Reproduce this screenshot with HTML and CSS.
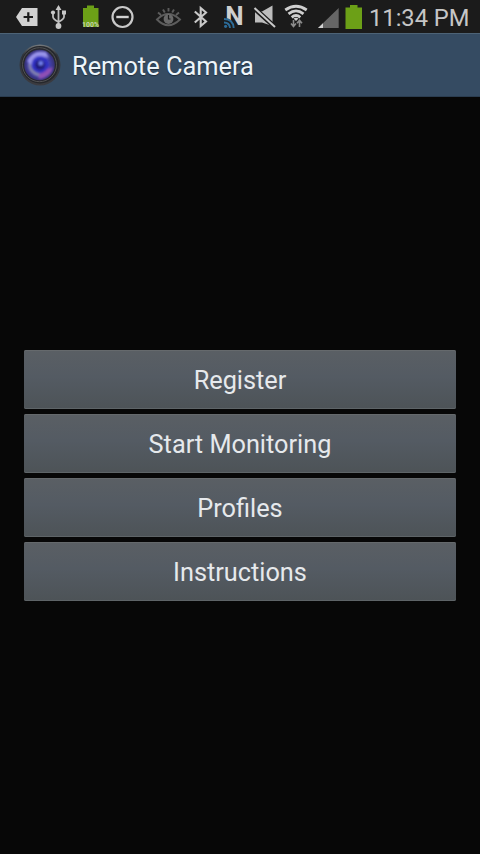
FILE: index.html
```html
<!DOCTYPE html>
<html lang="en">
<head>
<meta charset="utf-8">
<title>Remote Camera</title>
<link rel="stylesheet" href="styles.css">
</head>
<body>
<div class="status">
  <div class="icons notes">
    <svg class="icon" viewBox="10 0 32 33"><path fill="#d2d2d2" d="M16 17 22 8H37.5V26H22Z"/><path stroke="#1b1b1b" stroke-width="2.2" d="M28.3 12.3V21.7M23.6 17H33"/></svg>
    <svg class="icon" viewBox="42 0 32 33"><g fill="none" stroke="#bdbdbd" stroke-width="1.8"><path d="M58.5 8V27M53 12V17Q53 19 58.5 22M64 12V17Q64 19 58.5 22"/></g><path fill="#c8c8c8" d="M58.5 5 61.5 10H55.5ZM62 10.5h4v4h-4Z"/><circle cx="53" cy="12.5" r="2.1" fill="#c8c8c8"/><circle cx="58.5" cy="26" r="2.9" fill="#c8c8c8"/></svg>
    <svg class="icon" viewBox="74 0 32 33"><path fill="#6ca017" d="M83 8H87V5.5H94V8H98.5V27H83Z"/><text class="charge" x="82" y="27.3" textLength="17" lengthAdjust="spacingAndGlyphs">100%</text></svg>
    <svg class="icon" viewBox="106 0 32 33"><circle cx="122.5" cy="17" r="10" fill="none" stroke="#c9c9c9" stroke-width="2.2"/><path stroke="#d2d2d2" stroke-width="2.4" d="M116.3 17H128.7"/></svg>
  </div>
  <div class="icons">
    <svg class="icon" viewBox="152 0 32 33"><g fill="none" stroke="#5c5c5c" stroke-width="1.9"><path d="M157 19.5Q168 8.5 180 19.5Q168 31 157 19.5ZM158 12.5 161 15M163 9.5 164.8 12.5M168.5 8V11.5M174 9.5 172.2 12.5M179 12.5 176 15"/></g><circle cx="168.5" cy="19" r="4.9" fill="#696969"/><path fill="none" stroke="#1b1b1b" stroke-width="1.2" d="M168.5 15V19H170.5"/></svg>
    <svg class="icon" viewBox="184 0 32 33"><path fill="none" stroke="#c9c9c9" stroke-width="2.1" d="M194.8 11.5 206 21.5 200.7 26V8L206 12.5 194.8 22.5"/></svg>
    <svg class="icon" viewBox="216 0 32 33"><text class="nfc" x="225.2" y="25" textLength="18.4" lengthAdjust="spacingAndGlyphs">N</text><path fill="#1b1b1b" d="M223 18.5H227Q233 20 234 28H223Z"/><g fill="none" stroke="#2c6c99" stroke-width="1.9"><path d="M224 19Q233 19 233.7 28M224 22.5Q229.5 22.5 230 28"/></g><circle cx="225.6" cy="26.3" r="1.6" fill="#2c6c99"/></svg>
    <svg class="icon" viewBox="248 0 32 33"><path fill="#bdbdbd" d="M255 11.5H262L272.5 5.5V26L262 22.5H255Z"/><path stroke="#1b1b1b" stroke-width="4.8" d="M253 7 276 28"/><path stroke="#c9c9c9" stroke-width="2" d="M254.5 8 275 27"/></svg>
    <svg class="icon" viewBox="280 0 32 33"><g fill="none" stroke="#cfcfcf" stroke-width="2.8"><path d="M285.3 10Q296 2.5 306.7 10M288.5 13.8Q296 8 303.5 13.8M291.7 17.3Q296 13.8 300.3 17.3"/></g><path fill="#cfcfcf" d="M293.5 18.5Q296 17 298.5 18.5L296 21Z"/><path fill="none" stroke="#8c8c8c" stroke-width="1.6" d="M293.5 20V26M291 23.5 293.5 26.5 296 23.5M299.5 27V21M297 23.2 299.5 20.3 302 23.2"/></svg>
    <svg class="icon" viewBox="312 0 32 33"><path fill="#666" d="M318 28 338.7 8V28Z"/><path fill="#d2d2d2" d="M318 28 323 23.2V28Z"/></svg>
    <svg class="battery" viewBox="344 0 20 33"><path fill="#6ca017" d="M345.5 7.5H350V5H357.5V7.5H362V29H345.5Z"/></svg>
  </div>
  <time class="clock">11:34 PM</time>
</div>
<header class="bar">
  <svg class="logo" viewBox="0 0 42 42">
    <defs>
      <radialGradient id="lens"><stop offset="0" stop-color="#241475"/><stop offset=".38" stop-color="#2828b0"/><stop offset=".6" stop-color="#4544b8"/><stop offset="1" stop-color="#353072"/></radialGradient>
      <linearGradient id="rim" x2="0" y2="1"><stop offset="0" stop-color="#777b7e"/><stop offset=".25" stop-color="#30343a"/><stop offset="1" stop-color="#3b3b40"/></linearGradient>
      <filter id="soft"><feGaussianBlur stdDeviation=".9"/></filter>
    </defs>
    <circle cx="21" cy="21" r="20.5" fill="url(#rim)"/>
    <circle cx="21" cy="20.7" r="18.8" fill="#26282c"/>
    <circle cx="20.5" cy="20.7" r="17" fill="none" stroke="#515155"/>
    <circle cx="20.5" cy="21" r="15.3" fill="url(#lens)"/>
    <g filter="url(#soft)">
      <path fill="#9a94ea" d="M8 17Q14 5 27 8L30 14Q19 10 12 22Z"/>
      <path fill="#8f50b5" d="M20 35Q32 33 34 23L28 25Q25 29 19 30Z"/>
      <path fill="none" stroke="#8585aa" stroke-width="3" d="M10.5 20Q11 29 20 31"/>
      <circle cx="21" cy="20.5" r="8.5" fill="#3333c4"/>
      <circle cx="21" cy="21" r="5" fill="#211a7c"/>
      <circle cx="21.8" cy="19.3" r="2.2" fill="#7483f3"/>
    </g>
  </svg>
  <h1 class="title">Remote Camera</h1>
</header>
<main class="menu">
  <button class="item">Register</button>
  <button class="item">Start Monitoring</button>
  <button class="item">Profiles</button>
  <button class="item">Instructions</button>
</main>
</body>
</html>
```
FILE: styles.css
```css
* { box-sizing: border-box; }
body {
  margin: 0;
  height: 854px;
  display: flex;
  flex-direction: column;
  background: #070707;
  font-family: Roboto, sans-serif;
  overflow: hidden;
}
.status {
  height: 33px;
  flex: none;
  display: flex;
  padding-left: 10px;
  background: #1b1b1b;
}
.icons { display: flex; }
.notes { margin-right: 14px; }
.icon { width: 32px; height: 33px; }
.battery { width: 20px; height: 33px; }
.charge { font-size: 7px; font-weight: 700; fill: #c5d3ad; }
.nfc { font-size: 26px; font-weight: 700; fill: #cfcfcf; }
.clock {
  margin-left: 5px;
  font-size: 23.7px;
  line-height: 37px;
  color: #c6c6c6;
  white-space: nowrap;
}
.bar {
  height: 64px;
  flex: none;
  display: flex;
  align-items: center;
  gap: 11px;
  padding-left: 19px;
  background: #354b62;
  border-top: 1px solid #4d6376;
  border-bottom: 1px solid #2b3d50;
}
.logo { width: 42px; height: 42px; }
.title {
  margin: 0;
  font-size: 25.4px;
  font-weight: 400;
  line-height: 30px;
  color: #edf5fa;
  text-shadow: 0 1px 1px #1d2b3a;
  padding-top: 2px;
}
.menu {
  flex: 1;
  display: flex;
  flex-direction: column;
  justify-content: center;
  gap: 5px;
  padding: 0 24px;
}
.item {
  height: 59px;
  border: 0;
  border-radius: 2px;
  padding: 3px 0 0;
  font: 400 25.3px/30px Roboto, sans-serif;
  color: #e6e9ec;
  background: linear-gradient(#5a5f64, #545b63 45%, #4d5357);
  box-shadow: inset 0 1px #65696c, inset 0 -1px #5e6467;
}
```
